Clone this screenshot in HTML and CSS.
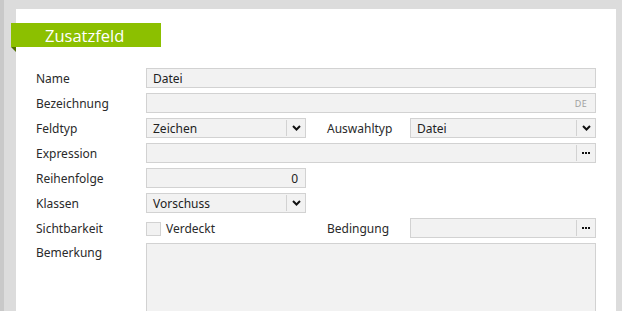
FILE: index.html
```html
<!DOCTYPE html>
<html lang="de">
<head>
<meta charset="utf-8">
<title>Zusatzfeld</title>
<link rel="stylesheet" href="styles.css">
</head>
<body>
<div class="frame">
  <div class="panel">
    <div class="banner">Zusatzfeld</div>
    <div class="form">
      <div class="lbl">Name</div>
      <div class="box span4">Datei</div>

      <div class="lbl">Bezeichnung</div>
      <div class="box span4 lang"><span class="de">DE</span></div>

      <div class="lbl">Feldtyp</div>
      <div class="box combo"><span class="val">Zeichen</span><span class="btn"><svg width="9" height="6" viewBox="0 0 9 6"><path d="M1 1 L4.5 4.5 L8 1" fill="none" stroke="#111" stroke-width="2"/></svg></span></div>
      <div></div>
      <div class="lbl">Auswahltyp</div>
      <div class="box combo"><span class="val">Datei</span><span class="btn"><svg width="9" height="6" viewBox="0 0 9 6"><path d="M1 1 L4.5 4.5 L8 1" fill="none" stroke="#111" stroke-width="2"/></svg></span></div>

      <div class="lbl">Expression</div>
      <div class="box span4 combo"><span class="val"></span><span class="btn dots"><i></i><i></i><i></i></span></div>

      <div class="lbl">Reihenfolge</div>
      <div class="box num">0</div>
      <div class="fill3"></div>

      <div class="lbl">Klassen</div>
      <div class="box combo"><span class="val">Vorschuss</span><span class="btn"><svg width="9" height="6" viewBox="0 0 9 6"><path d="M1 1 L4.5 4.5 L8 1" fill="none" stroke="#111" stroke-width="2"/></svg></span></div>
      <div class="fill3"></div>

      <div class="lbl">Sichtbarkeit</div>
      <label class="check"><span class="cb"></span>Verdeckt</label>
      <div></div>
      <div class="lbl">Bedingung</div>
      <div class="box combo"><span class="val"></span><span class="btn dots"><i></i><i></i><i></i></span></div>

      <div class="lbl top">Bemerkung</div>
      <div class="box span4 area"></div>
    </div>
  </div>
</div>
</body>
</html>
```

FILE: styles.css
```css
html, body {
  margin: 0;
  padding: 0;
  height: 100%;
  overflow: hidden;
}
body {
  background: #dcdcdc;
  font-family: "Noto Sans", "Open Sans", sans-serif;
  font-size: 12px;
  color: #222;
}
.frame {
  height: 100%;
  border-left: 4px solid #c9c9c9;
  box-sizing: border-box;
  padding: 9px 6px 0 12px;
}
.panel {
  background: #fff;
  height: 100%;
  padding-top: 14px;
  box-sizing: border-box;
}
.banner {
  position: relative;
  margin-left: -5px;
  width: 150px;
  height: 24px;
  box-sizing: border-box;
  padding-left: 34px;
  background: #8cc000;
  color: #fff;
  font-family: "Open Sans", "Noto Sans", sans-serif;
  font-size: 16.5px;
  line-height: 25px;
}
.banner::after {
  content: "";
  position: absolute;
  left: 0;
  top: 24px;
  border-top: 5px solid #4f6e00;
  border-left: 5px solid transparent;
}
.form {
  display: grid;
  grid-template-columns: 110px 160px 21px 83px 1fr;
  grid-auto-rows: 20px;
  row-gap: 5px;
  padding: 21px 20px 0 20px;
}
.lbl {
  line-height: 20px;
  padding-top: 1px;
  color: #2a2a2a;
  white-space: nowrap;
}
.lbl.top { line-height: 18px; }
.box {
  background: #f2f2f2;
  border: 1px solid #d2d2d2;
  box-sizing: border-box;
  line-height: 17px;
  padding: 1px 6px 0;
  white-space: nowrap;
  overflow: hidden;
}
.span4 { grid-column: 2 / 6; }
.fill3 { grid-column: 3 / 6; }
.lang {
  display: flex;
  justify-content: flex-end;
  align-items: center;
  padding-right: 8px;
}
.de {
  font-size: 9px;
  color: #a0a0a0;
  letter-spacing: 0.3px;
}
.combo {
  display: flex;
  padding-right: 0;
}
.combo .val { flex: 1; }
.combo .btn {
  width: 18px;
  flex: none;
  border-left: 1px solid #d2d2d2;
  display: flex;
  align-items: center;
  justify-content: center;
  margin: 0 0 1px;
}
.dots i {
  display: block;
  width: 2px;
  height: 2px;
  background: #111;
  margin: 0 0.5px;
}
.num { text-align: right; padding-right: 7px; }
.check {
  display: flex;
  align-items: center;
  gap: 5px;
  line-height: 20px;
  padding-top: 1px;
  color: #2a2a2a;
}
.cb {
  width: 15px;
  height: 14px;
  box-sizing: border-box;
  background: #f2f2f2;
  border: 1px solid #d2d2d2;
}
.area {
  grid-row: span 3;
  height: 80px;
}
```
